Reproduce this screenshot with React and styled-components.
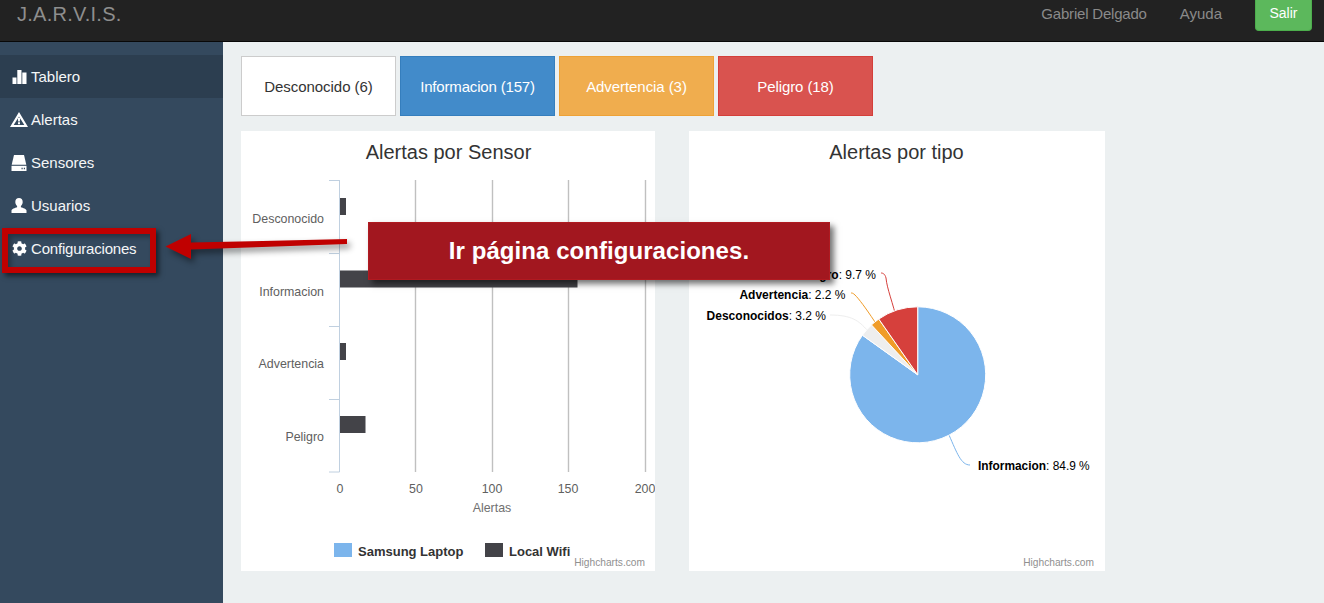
import React from "react";
import styled, { createGlobalStyle } from "styled-components";
import { FaCog } from "react-icons/fa";

const Global = createGlobalStyle`
  html, body { margin: 0; padding: 0; height: 100%; }
  body { font-family: "Liberation Sans", Arial, sans-serif; background: #ecf0f1; overflow: hidden; }
`;

const Page = styled.div`
  position: relative;
  width: 1324px;
  height: 603px;
  overflow: hidden;
  display: flex;
  flex-direction: column;
`;

const Navbar = styled.header`
  flex: none;
  height: 41px;
  background: #222222;
  border-bottom: 1px solid #080808;
  display: flex;
  align-items: flex-start;
  padding: 0 12px 0 17px;
`;

const Brand = styled.div`
  font-size: 20px;
  line-height: 28px;
  letter-spacing: 0.25px;
  color: #8e8e8e;
  flex: 1;
`;

const NavLink = styled.a`
  font-size: 15px;
  line-height: 28px;
  color: #8a8a8a;
  letter-spacing: ${(p) => p.$ls || 0}px;
  margin-right: ${(p) => p.$gap}px;
`;

const Salir = styled.button`
  width: 57px;
  height: 31px;
  border: 1px solid #4cae4c;
  border-top: 0;
  border-radius: 0 0 4px 4px;
  background: #5cb85c;
  color: #fff;
  font: 14px/26px "Liberation Sans", Arial, sans-serif;
  padding: 0 0 4px;
`;

const Body = styled.div`
  flex: 1;
  display: flex;
  min-height: 0;
`;

const Sidebar = styled.nav`
  flex: none;
  width: 223px;
  background: #34495e;
  padding-top: 13px;
  box-sizing: border-box;
`;

const Item = styled.a`
  display: flex;
  align-items: center;
  height: 43px;
  padding-left: 10px;
  gap: 3px;
  color: #f4f6f7;
  font-size: 15px;
  letter-spacing: ${(p) => p.$ls || 0}px;
  background: ${(p) => (p.$active ? "#2c3e50" : "transparent")};
`;

const IconBox = styled.span`
  width: 18px;
  height: 18px;
  display: inline-flex;
  align-items: center;
  justify-content: center;
  flex: none;
`;

const Main = styled.main`
  flex: 1;
  padding: 14px 0 0 18px;
  display: flex;
  flex-direction: column;
  gap: 15px;
`;

const Tabs = styled.div`
  display: flex;
  gap: 4px;
`;

const Tab = styled.button`
  width: 155px;
  height: 60px;
  box-sizing: border-box;
  border: 1px solid ${(p) => p.$border};
  background: ${(p) => p.$bg};
  color: ${(p) => p.$fg};
  font: 15px "Liberation Sans", Arial, sans-serif;
  letter-spacing: ${(p) => p.$ls}px;
  padding: 0;
`;

const Charts = styled.div`
  display: flex;
  gap: 34px;
`;

const Panel = styled.section`
  width: ${(p) => p.$w}px;
  height: 440px;
  background: #fff;
  overflow: hidden;
`;

const ChartSvg = styled.svg`
  display: block;
  font-family: "Liberation Sans", Arial, sans-serif;
`;

const Highlight = styled.div`
  position: absolute;
  left: 2px;
  top: 228px;
  width: 154px;
  height: 45px;
  box-sizing: border-box;
  border: 6px solid #c00000;
  box-shadow: 3px 3px 5px rgba(0,0,0,.55), inset 3px 3px 5px rgba(0,0,0,.3);
`;

const Arrow = styled.svg`
  position: absolute;
  left: 160px;
  top: 225px;
  filter: drop-shadow(3px 4px 3px rgba(0,0,0,.45));
`;

const Callout = styled.div`
  position: absolute;
  left: 368px;
  top: 222px;
  width: 462px;
  height: 58px;
  box-sizing: border-box;
  background: #a2171f;
  border: 1px solid #b01a20;
  color: #fff;
  font-size: 24px;
  font-weight: 700;
  letter-spacing: 0.06px;
  display: flex;
  align-items: center;
  justify-content: center;
  box-shadow: 4px 4px 6px rgba(0,0,0,.55);
`;

const menu = [
  { label: "Tablero", active: true, icon: (
    <svg width="15" height="14" viewBox="0 0 15 14"><path fill="#fff" d="M0.500 7.500h4V14h-4zM5.300 0h4.200v14H5.300zM10.300 2.500h4.200V14h-4.200z"/></svg>) },
  { label: "Alertas", icon: (
    <svg width="18" height="15" viewBox="0 0 18 15"><path fill="#fff" fillRule="evenodd" d="M9 0 18 15H0zM9 4.400 3.700 13h10.600z"/><path fill="#fff" d="M7.700 5.800h2.600l-.5 3.800H8.200zM8 10.300h2v2H8z"/></svg>) },
  { label: "Sensores", icon: (
    <svg width="16" height="16" viewBox="0 0 16 16"><path fill="#fff" d="M3 0h10l2.300 9.800H.7z"/><path fill="#fff" d="M.5 10.800h15V16H.5z"/><path fill="#34495e" d="M10.500 12.800h1.200v1.400h-1.200zM12.800 12.800H14v1.400h-1.200z"/></svg>) },
  { label: "Usuarios", icon: (
    <svg width="16" height="15" viewBox="0 0 16 15"><path fill="#fff" d="M8 0c2.300 0 3.700 1.600 3.700 4 0 1.600-.8 3.200-1.800 4v1.200c2.100.8 5.600 1.400 5.600 3.400V15H.5v-2.400c0-2 3.500-2.600 5.600-3.400V8c-1-.8-1.800-2.400-1.800-4C4.300 1.600 5.700 0 8 0z"/></svg>) },
  { label: "Configuraciones", ls: -0.2, icon: <FaCog size={15} color="#fff" /> },
];

const tabs = [
  { label: "Desconocido (6)", bg: "#ffffff", border: "#cccccc", fg: "#333333", ls: -0.05 },
  { label: "Informacion (157)", bg: "#428bca", border: "#357ebd", fg: "#ffffff", ls: -0.17 },
  { label: "Advertencia (3)", bg: "#f0ad4e", border: "#eea236", fg: "#ffffff", ls: -0.07 },
  { label: "Peligro (18)", bg: "#d9534f", border: "#d43f3a", fg: "#ffffff", ls: -0.1 },
];

const bars = [
  { name: "Desconocido", y: 67, w: 6, ty: 92 },
  { name: "Informacion", y: 139.500, w: 237.500, ty: 165 },
  { name: "Advertencia", y: 212, w: 6, ty: 237 },
  { name: "Peligro", y: 285, w: 25.500, ty: 310 },
];

function BarChart() {
  const axisX = 98.5;
  return (
    <ChartSvg width="414" height="440" viewBox="0 0 414 440">
      <text x="207.500" y="28" textAnchor="middle" fontSize="20" fill="#333">Alertas por Sensor</text>
      {[174.500, 251.500, 327.500, 404.500].map((x) => (
        <line key={x} x1={x} x2={x} y1="49" y2="341" stroke="#c0c0c0" strokeWidth="1.4" />
      ))}
      <line x1={axisX} x2={axisX} y1="49" y2="341" stroke="#c0d0e0" />
      {[49.500, 122.500, 195.500, 268.500, 341].map((y) => (
        <line key={y} x1="88" x2={axisX} y1={y} y2={y} stroke="#c0d0e0" />
      ))}
      {bars.map((b) => (
        <g key={b.name}>
          <rect x="99" y={b.y} width={b.w} height="17" fill="#434348" />
          <text x="83" y={b.ty} textAnchor="end" fontSize="12.400" fill="#606060">{b.name}</text>
        </g>
      ))}
      {[[0, 99], [50, 175], [100, 251], [150, 327], [200, 404]].map(([v, x]) => (
        <text key={v} x={x} y="362" textAnchor="middle" fontSize="12.400" fill="#606060">{v}</text>
      ))}
      <text x="251" y="381" textAnchor="middle" fontSize="12.400" fill="#707070">Alertas</text>
      <rect x="93" y="412" width="18" height="14" fill="#7cb5ec" />
      <text x="117" y="425" fontSize="13" fontWeight="700" fill="#333">Samsung Laptop</text>
      <rect x="244" y="412" width="18" height="14" fill="#434348" />
      <text x="268" y="425" fontSize="13" fontWeight="700" fill="#333">Local Wifi</text>
      <text x="404" y="435" textAnchor="end" fontSize="10.200" fill="#909090">Highcharts.com</text>
    </ChartSvg>
  );
}

const CX = 228.7, CY = 243.800, R = 68;
const pt = (deg) => {
  const a = (deg * Math.PI) / 180;
  return [CX + R * Math.sin(a), CY - R * Math.cos(a)];
};
const slicePath = (a, b) => {
  const [x1, y1] = pt(a);
  const [x2, y2] = pt(b);
  return `M${CX} ${CY}L${x1} ${y1}A${R} ${R} 0 ${b - a > 180 ? 1 : 0} 1 ${x2} ${y2}Z`;
};

const slices = [
  { color: "#7cb5ec", from: 0, to: 305.6 },
  { color: "#eeeeee", from: 305.6, to: 317.2 },
  { color: "#f09c28", from: 317.2, to: 325.1 },
  { color: "#d6403c", from: 325.1, to: 360 },
];

const labels = [
  { name: "Peligro", val: ": 9.7 %", x: 187, y: 148, anchor: "end", size: 12 },
  { name: "Advertencia", val: ": 2.2 %", x: 156.500, y: 168, anchor: "end", size: 12 },
  { name: "Desconocidos", val: ": 3.2 %", x: 137, y: 189, anchor: "end", size: 12 },
  { name: "Informacion", val: ": 84.9 %", x: 289, y: 339, anchor: "start", size: 11.9 },
];

function PieChart() {
  return (
    <ChartSvg width="416" height="440" viewBox="0 0 416 440">
      <text x="207.500" y="28" textAnchor="middle" fontSize="20" fill="#333">Alertas por tipo</text>
      <g fill="none" strokeWidth="1">
        <path d="M208 190C204 172 198 158 197 147 196 143 194 142 192 142" stroke="#d6403c" />
        <path d="M186 191C176 176 170 168 166 164 164 162 163 162 162 162" stroke="#f09c28" />
        <path d="M178 199C170 190 163 184 141 184" stroke="#eeeeee" />
        <path d="M260 304C268 322 272 334 281 334" stroke="#7cb5ec" />
      </g>
      {slices.map((s) => (
        <path key={s.color} d={slicePath(s.from, s.to)} fill={s.color} stroke="#fff" strokeWidth="1" strokeLinejoin="round" />
      ))}
      {labels.map((l) => (
        <text key={l.name} x={l.x} y={l.y} textAnchor={l.anchor} fontSize={l.size} fill="#000">
          <tspan fontWeight="700">{l.name}</tspan>{l.val}
        </text>
      ))}
      <text x="405" y="435" textAnchor="end" fontSize="10.200" fill="#909090">Highcharts.com</text>
    </ChartSvg>
  );
}

export default function App() {
  return (
    <Page>
      <Global />
      <Navbar>
        <Brand>J.A.R.V.I.S.</Brand>
        <NavLink $gap={33} $ls={-0.2}>Gabriel Delgado</NavLink>
        <NavLink $gap={33}>Ayuda</NavLink>
        <Salir>Salir</Salir>
      </Navbar>
      <Body>
        <Sidebar>
          {menu.map((m) => (
            <Item key={m.label} $active={m.active} $ls={m.ls}>
              <IconBox>{m.icon}</IconBox>
              {m.label}
            </Item>
          ))}
        </Sidebar>
        <Main>
          <Tabs>
            {tabs.map((t) => (
              <Tab key={t.label} $bg={t.bg} $border={t.border} $fg={t.fg} $ls={t.ls}>{t.label}</Tab>
            ))}
          </Tabs>
          <Charts>
            <Panel $w={414}><BarChart /></Panel>
            <Panel $w={416}><PieChart /></Panel>
          </Charts>
        </Main>
      </Body>
      <Highlight />
      <Arrow width="195" height="45" viewBox="0 0 195 45">
        <path fill="#c00000" d="M5.500 21.500 31 9v8.500L187 14v5L31 24.500V34z" />
      </Arrow>
      <Callout>Ir página configuraciones.</Callout>
    </Page>
  );
}
